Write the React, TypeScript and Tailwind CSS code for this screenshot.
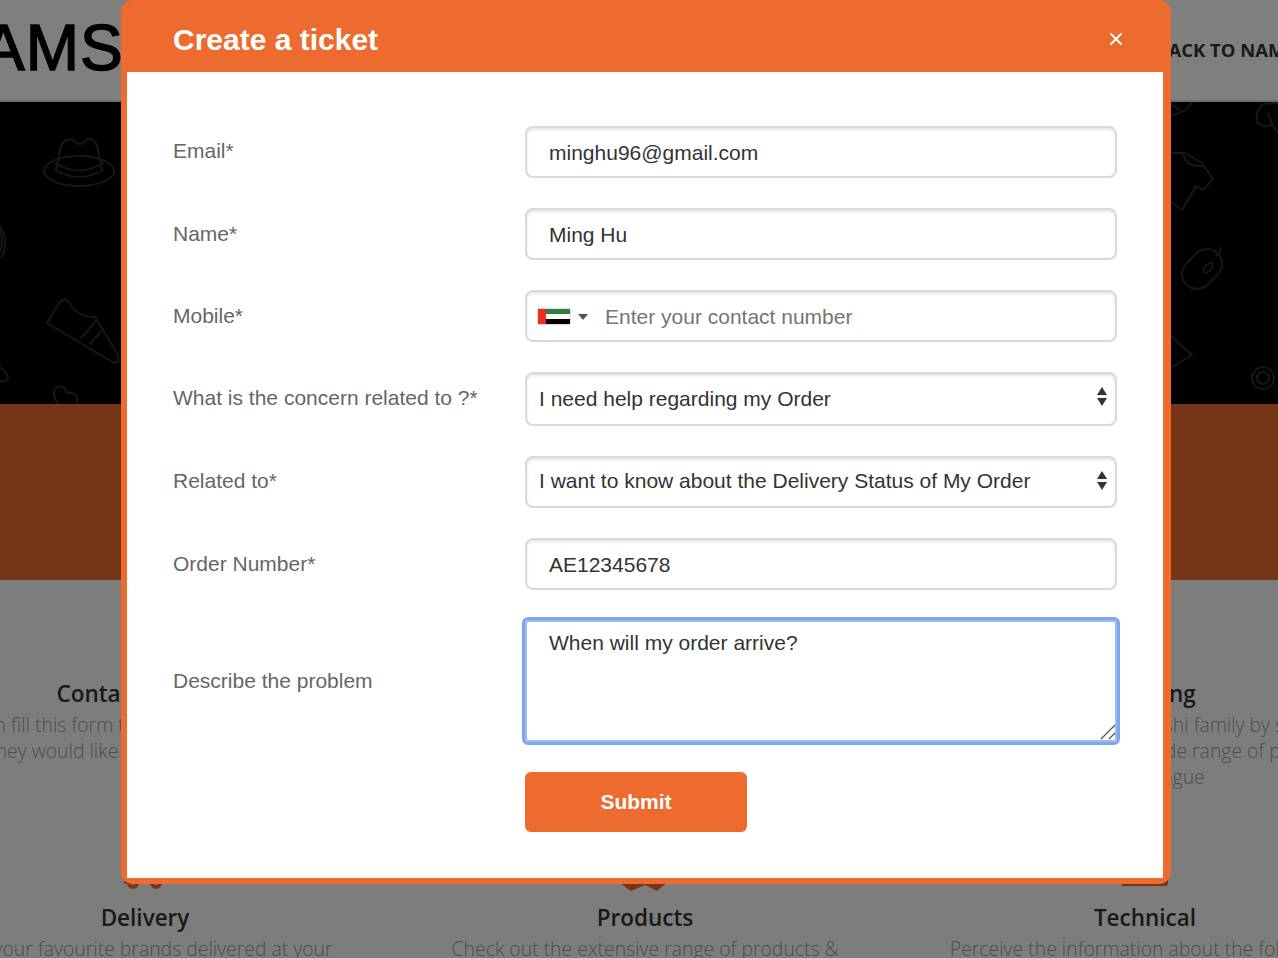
import { X } from "lucide-react";

const fieldClass =
  "w-full border-2 border-[#d9d9d9] rounded-lg bg-white text-[21px] text-[#333] shadow-[inset_0_2px_3px_rgba(0,0,0,0.1)] outline-none";

function HeroPattern() {
  return (
    <svg viewBox="0 102 1278 302" className="block w-full h-full" fill="none" stroke="#2e2e2e" strokeWidth="2" strokeLinecap="round" strokeLinejoin="round">
      {/* hat */}
      <ellipse cx="79" cy="171" rx="35" ry="15" />
      <path d="M56 170 L61 146 Q66 135 76 142 Q80 146 84 142 Q92 134 97 146 L102 170" />
      <path d="M55 163 Q79 178 103 163 M55 170 Q79 184 103 170" />
      {/* globe */}
      <path d="M-12 226 A17 17 0 0 1 0 226 Q9 240 2 257 M-2 226 Q6 240 -2 256" />
      {/* shoe */}
      <path d="M47 323 L59 303 Q65 296 70 303 Q75 316 95 317 L117 353 Q121 363 114 363 Z" />
      <path d="M81 338 L97 320 M90 344 L103 329 M47 323 L51 318" />
      {/* heart and bits */}
      <path d="M58 404 Q50 390 58 387 Q65 385 67 393 Q72 391 76 396 Q78 400 76 404" />
      <path d="M0 367 Q8 374 8 378 Q6 383 0 381" />
      {/* shirt */}
      <path d="M1172 153 L1185 153 L1202 163 L1213 179 L1203 190 L1196 186 L1182 210 L1172 203" />
      <path d="M1183 153 Q1185 167 1202 166" />
      {/* mouse */}
      <rect x="1180" y="254" width="44" height="30" rx="15" transform="rotate(-45 1202 269)" />
      <ellipse cx="1208" cy="268" rx="3" ry="6" transform="rotate(45 1208 268)" />
      <path d="M1216 256 Q1222 252 1220 248" />
      {/* gear */}
      <circle cx="1263" cy="378" r="6" />
      <circle cx="1263" cy="378" r="11" strokeDasharray="5 2" />
      {/* cut-off shapes at the modal edge */}
      <path d="M1172 115 Q1186 113 1192 102 M1172 105 L1180 110" />
      <path d="M1172 337 L1192 355 L1172 367" />
      <path d="M1278 103 L1263 104 Q1255 112 1257 122 Q1263 128 1272 125 L1278 133 M1268 114 L1274 128" />
    </svg>
  );
}

function DeliveryIcon() {
  return (
    <svg width="60" height="50" viewBox="0 0 60 50" className="block mx-auto" fill="none" stroke="#ed6b2e" strokeWidth="4">
      <circle cx="18" cy="44" r="4" />
      <circle cx="41" cy="44" r="4" />
      <path d="M10 42 L12 44 M26 42 L33 42" />
    </svg>
  );
}

function ProductsIcon() {
  return (
    <svg width="60" height="53" viewBox="0 0 60 53" className="block mx-auto overflow-visible" fill="#ed6b2e">
      <path d="M1 41 L14 41 L30 45 L46 41 L55 41 L42 52 L30 46 L16 52 Z" />
    </svg>
  );
}

function TechnicalIcon() {
  return (
    <svg width="60" height="49" viewBox="0 0 60 49" className="block mx-auto" fill="#ed6b2e">
      <path d="M7 40 L53 40 L53 44 Q53 47 50 47 L7 47 Z" />
    </svg>
  );
}

function InfoCol({ icon, title, lines }: { icon?: React.ReactNode; title: string; lines: string[] }) {
  return (
    <div className="w-[500px] shrink-0 flex flex-col items-center">
      <div className="h-[50px] mb-[14px] w-full">{icon}</div>
      <h3 className="text-[22.5px] leading-[30px] font-semibold text-[#333] mb-[3px] whitespace-nowrap">{title}</h3>
      {lines.map((l) => (
        <p key={l} className="text-[19.4px] leading-[26px] font-light text-[#999] whitespace-nowrap">
          {l}
        </p>
      ))}
    </div>
  );
}

function Row({ label, children, labelClass = "" }: { label: string; children: React.ReactNode; labelClass?: string }) {
  return (
    <div className="flex items-center">
      <label className={`w-[352px] shrink-0 text-[21px] leading-[26px] text-[#666] ${labelClass}`}>{label}</label>
      <div className="relative w-[592px]">{children}</div>
    </div>
  );
}

function Arrows() {
  return (
    <svg width="10" height="19" viewBox="0 0 10 19" className="absolute right-[10px] top-[15px]" fill="#333">
      <path d="M5 0 L10 8 L0 8 Z M0 11 L10 11 L5 19 Z" />
    </svg>
  );
}

export default function App() {
  return (
    <div className="relative w-[1278px] h-[958px] overflow-hidden bg-white font-['Open_Sans',sans-serif]">
      {/* page behind the dialog */}
      <header className="h-[102px] border-b-2 border-[#dcdcdc] flex items-center">
        <span className="ml-[-18px] mb-[4px] text-[64px] leading-none tracking-[1px] text-black [-webkit-text-stroke:1.5px_black] font-['Liberation_Sans',sans-serif]">AMS</span>
        <span className="ml-auto mr-[-38px] text-[18.5px] font-bold text-[#333] whitespace-nowrap">BACK TO NAMSHI</span>
      </header>
      <div className="h-[302px] bg-black">
        <HeroPattern />
      </div>
      <div className="h-[176px] bg-[#ed6b2e]" />
      <section className="pt-[35px] bg-[#fbfbfb] h-[378px]">
        <div className="flex ml-[-105px] w-[1500px]">
          <InfoCol title="Contact Support" lines={["You can fill this form to get in touch with us now", "they would like to get resolved soon"]} />
          <InfoCol title="Feedback" lines={["Share your experience"]} />
          <InfoCol title="Shopping" lines={["Become a part of the Namshi family by shopping", "and choosing from our wide range of products", "our catalogue"]} />
        </div>
        <div className="flex ml-[-105px] w-[1500px] mt-[49px]">
          <InfoCol icon={<DeliveryIcon />} title="Delivery" lines={["Get your favourite brands delivered at your"]} />
          <InfoCol icon={<ProductsIcon />} title="Products" lines={["Check out the extensive range of products &"]} />
          <InfoCol icon={<TechnicalIcon />} title="Technical" lines={["Perceive the information about the following:"]} />
        </div>
      </section>

      {/* overlay + dialog */}
      <div className="absolute inset-0 bg-black/50 pl-[121px] font-['Liberation_Sans',sans-serif]">
        <div className="w-[1050px] h-[884px] bg-[#ed6b2e] rounded-[12px] pl-[6px] pr-[8px] pb-[6px] flex flex-col">
          <div className="h-[72px] shrink-0 flex items-center justify-between pl-[46px] pr-[37px] pt-[6px]">
            <h2 className="text-[30px] font-bold text-white">Create a ticket</h2>
            <X size={20} strokeWidth={2.2} className="text-white" />
          </div>
          <form className="flex-1 bg-white pt-[54px] pl-[46px] flex flex-col gap-[30px]">
            <Row label="Email*" labelClass="mb-[2px]">
              <input readOnly value="minghu96@gmail.com" className={`${fieldClass} h-[52px] pl-[22px] pt-[2px]`} />
            </Row>
            <Row label="Name*">
              <input readOnly value="Ming Hu" className={`${fieldClass} h-[52px] pl-[22px] pt-[2px]`} />
            </Row>
            <Row label="Mobile*">
              <input readOnly placeholder="Enter your contact number" className={`${fieldClass} h-[52px] pl-[78px] pt-[2px] placeholder:text-[#757575]`} />
              <div className="absolute left-[13px] top-[19px] flex items-center">
                <div className="flex w-[32px] h-[15px] shadow-[0_0_2px_rgba(0,0,0,0.4)]">
                  <div className="w-[8px] bg-[#ee2a22]" />
                  <div className="flex-1 flex flex-col">
                    <div className="flex-1 bg-[#2f7d43]" />
                    <div className="flex-1 bg-white" />
                    <div className="flex-1 bg-black" />
                  </div>
                </div>
                <div className="ml-[8px] w-0 h-0 border-x-[5px] border-x-transparent border-t-[6px] border-t-[#555]" />
              </div>
            </Row>
            <Row label="What is the concern related to ?*" labelClass="mb-[2px]">
              <select className={`${fieldClass} h-[54px] pl-[12px] pb-[1px] appearance-none rounded-[10px]`} defaultValue="order">
                <option value="order">I need help regarding my Order</option>
              </select>
              <Arrows />
            </Row>
            <Row label="Related to*" labelClass="mb-[3px]">
              <select className={`${fieldClass} h-[52px] pl-[12px] pb-[2px] appearance-none rounded-[10px]`} defaultValue="status">
                <option value="status">I want to know about the Delivery Status of My Order</option>
              </select>
              <Arrows />
            </Row>
            <Row label="Order Number*">
              <input readOnly value="AE12345678" className={`${fieldClass} h-[52px] pl-[22px] pt-[2px]`} />
            </Row>
            <Row label="Describe the problem">
              <textarea
                readOnly
                value="When will my order arrive?"
                className="block w-full h-[122px] resize-none border-2 border-[#9dbaf2] rounded-[3px] bg-white pl-[22px] pt-[8px] text-[21px] leading-[26px] text-[#333] outline-[3px] outline-[#7fa5f0] outline-offset-0"
              />
              <svg width="16" height="16" viewBox="0 0 16 16" className="absolute right-[1px] bottom-[2px]" fill="none" stroke="#555" strokeWidth="1.3">
                <path d="M1 15 L15 1 M9 15 L15 9" />
              </svg>
            </Row>
            <div className="pl-[352px]">
              <button type="button" className="w-[222px] h-[60px] rounded-md bg-[#ed6b2e] text-white text-[21px] font-bold">
                Submit
              </button>
            </div>
          </form>
        </div>
      </div>
    </div>
  );
}
